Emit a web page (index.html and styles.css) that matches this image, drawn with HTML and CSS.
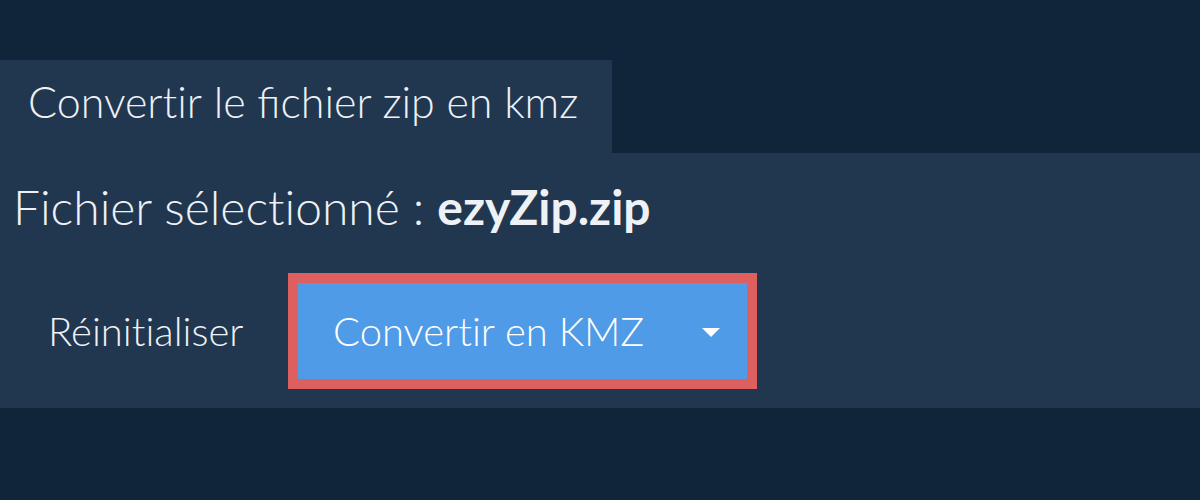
FILE: index.html
```html
<!DOCTYPE html>
<html lang="fr">
<head>
  <meta charset="UTF-8">
  <title>Convertir le fichier zip en kmz</title>
  <link rel="stylesheet" href="styles.css">
</head>
<body>
  <div class="page">
    <div class="tab"><span class="plain">Convertir</span> le fichier zip en kmz</div>
    <div class="panel">
      <div class="selected">Fichier sélectionné : <b>ezyZip.zip</b></div>
      <div class="actions">
        <button class="reset">Réinitialiser</button>
        <div class="convert-wrap">
          <button class="convert">
            <span>Convertir en KMZ</span>
            <svg class="caret" width="18" height="9" viewBox="0 0 18 9"><path d="M0 0 L18 0 L9 9 Z" fill="#fff"/></svg>
          </button>
        </div>
      </div>
    </div>
  </div>
</body>
</html>
```

FILE: styles.css
```css
html, body {
  margin: 0;
  padding: 0;
  background-color: #10243a;
  color: #eef1f5;
  font-family: 'Lato', 'Liberation Sans', sans-serif;
  height: 100%;
}
.page {
  padding-top: 60px;
}
.tab {
  display: inline-block;
  background-color: #213750;
  font-size: 43px;
  font-weight: 300;
  padding: 0 34px 0 28px;
  height: 93px;
  line-height: 84px;
}
.plain {
  font-variant-ligatures: none;
}
.panel {
  background-color: #213750;
  padding: 24px 0 19px 13px;
}
.selected {
  font-size: 48px;
  font-weight: 300;
  line-height: 60px;
  font-variant-ligatures: none;
}
.selected b {
  font-weight: 700;
}
.actions {
  display: flex;
  align-items: center;
  margin-top: 36px;
  gap: 22px;
}
.reset {
  background: none;
  border: 0;
  color: #eef1f5;
  font-family: inherit;
  font-size: 40px;
  font-weight: 300;
  font-variant-ligatures: none;
  width: 253px;
  text-align: left;
  padding: 0 0 0 35px;
}
.convert-wrap {
  border: 10px solid #dd5f5e;
}
.convert {
  display: flex;
  align-items: center;
  width: 449px;
  height: 96px;
  background-color: #4f9be7;
  border: 0;
  color: #fff;
  font-family: inherit;
  font-size: 40px;
  font-weight: 300;
  font-variant-ligatures: none;
  padding: 0 27px 0 35px;
  justify-content: space-between;
}
.caret {
  margin-top: 2px;
}
```
